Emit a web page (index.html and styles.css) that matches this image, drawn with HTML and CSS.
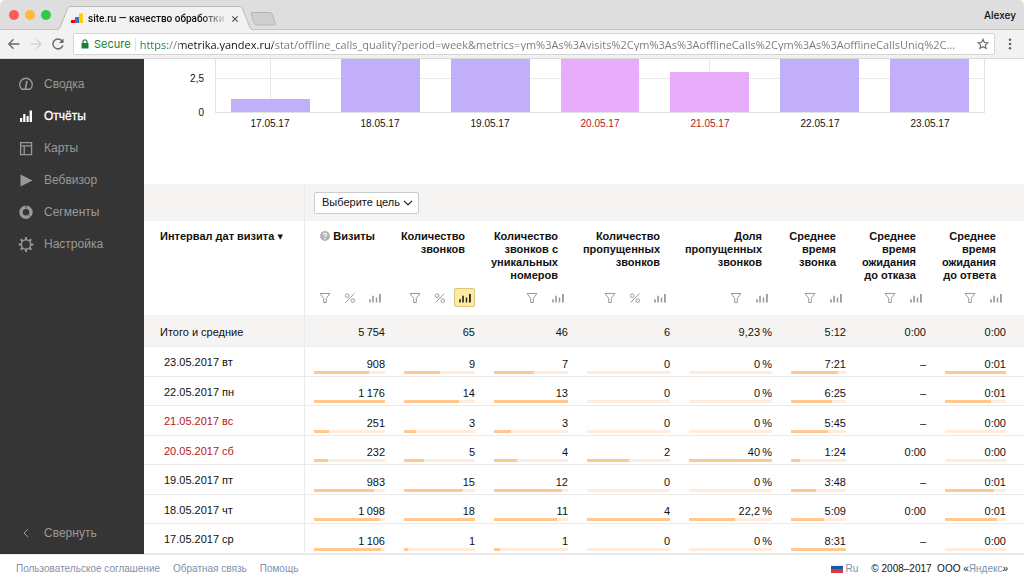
FILE: index.html
```html
<!DOCTYPE html>
<html lang="ru">
<head>
<meta charset="utf-8">
<title>site.ru — качество обработки</title>
<link rel="stylesheet" href="styles.css">
</head>
<body>
<svg class="sprite" aria-hidden="true">
  <symbol id="funnel" viewBox="0 0 12 12"><path d="M1 1.5h10L7.3 6.3v4.2H4.7V6.3z" fill="none" stroke="currentColor"/></symbol>
  <symbol id="percent" viewBox="0 0 12 12"><g fill="none" stroke="currentColor"><circle cx="3.2" cy="3.7" r="1.8"/><circle cx="8.8" cy="8.6" r="1.8"/><path d="M10.3 1.5L1.7 10.5"/></g></symbol>
  <symbol id="bars" viewBox="0 0 12 12"><path d="M.2 7.2h1.6v3.3H.2zM3.2 3.7h1.6v6.8H3.2zM6.8 5.6h1.4v4.9H6.8zM10 2h1.8v8.5H10z" fill="currentColor"/></symbol>
</svg>

<header class="browser">
  <div class="tabs">
    <div class="lights"><i class="light red"></i><i class="light amber"></i><i class="light green"></i></div>
    <div class="tab">
      <svg class="tab-edge" viewBox="0 0 14 24"><path d="M0 24C3 23 3 22 4 19L10 4C11 1 12 .5 14 .5V24z" fill="#f2f2f2"/><path d="M0 23.5C3 23 3 22 4 19L10 4C11 1 12 .5 14 .5" fill="none" stroke="#b9b9b9"/></svg>
      <div class="tab-body">
        <svg class="favicon" viewBox="0 0 12 11"><path d="M0 7h4v3H0z" fill="#f00"/><path d="M4 4h4v6H4z" fill="#3f72c8"/><path d="M8 .5h4V10H8z" fill="#ffcc00"/></svg>
        <span class="tab-title">site.ru — качество обработки</span>
        <button class="plain" aria-label="Закрыть вкладку"><svg width="8" height="8" viewBox="0 0 8 8"><path d="M1.3 1.3l5.4 5.4M6.7 1.3L1.3 6.7" stroke="#555" stroke-width="1.2"/></svg></button>
      </div>
      <svg class="tab-edge flip" viewBox="0 0 14 24"><path d="M0 24C3 23 3 22 4 19L10 4C11 1 12 .5 14 .5V24z" fill="#f2f2f2"/><path d="M0 23.5C3 23 3 22 4 19L10 4C11 1 12 .5 14 .5" fill="none" stroke="#b9b9b9"/></svg>
    </div>
    <button class="plain new-tab" aria-label="Новая вкладка"><svg width="28" height="14" viewBox="0 0 28 14"><path d="M3 .5h18q1.500 0 2 1.500l3.300 9q.5 2-1.300 2H8q-2 0-2.600-1.500L2 2Q1.500.5 3 .5z" fill="#cfcfcf" stroke="#b5b5b5"/></svg></button>
    <span class="profile">Alexey</span>
  </div>
  <div class="toolbar">
    <button class="plain" aria-label="Назад"><svg width="14" height="14" viewBox="0 0 14 14"><path d="M12.500 7H2M6.500 2.200L1.800 7l4.700 4.800" fill="none" stroke="#666" stroke-width="1.300"/></svg></button>
    <button class="plain" aria-label="Вперёд"><svg width="14" height="14" viewBox="0 0 14 14"><path d="M2 7h10M7.500 2.200L12.200 7l-4.700 4.800" fill="none" stroke="#d2d2d2" stroke-width="1.300"/></svg></button>
    <button class="plain" aria-label="Обновить"><svg width="14" height="14" viewBox="0 0 14 14"><path d="M11.800 8.200A5 5 0 1 1 10.600 3.500L12 5" fill="none" stroke="#666" stroke-width="1.400"/><path d="M12.500 1.500V6H8z" fill="#666"/></svg></button>
    <div class="address">
      <svg width="8" height="10" viewBox="0 0 8 10"><path d="M.5 4h7v5.500h-7z" fill="#188038"/><path d="M2 4.500V2.800a2 2 0 0 1 4 0v1.700" fill="none" stroke="#188038" stroke-width="1.200"/></svg>
      <span class="secure">Secure</span>
      <input class="url" type="text" aria-label="Адрес" value="https://metrika.yandex.ru/stat/offline_calls_quality?period=week&amp;metrics=ym%3As%3Avisits%2Cym%3As%3AofflineCalls%2Cym%3As%3AofflineCallsUniq%2C…">
      <button class="plain" aria-label="В закладки"><svg width="12" height="12" viewBox="0 0 12 12"><path d="M6 1.300l1.400 3.200 3.500.3-2.600 2.300.8 3.400L6 8.700l-3.100 1.800.8-3.400L1.100 4.800l3.500-.3z" fill="none" stroke="#666" stroke-width="1.100"/></svg></button>
    </div>
    <button class="plain menu" aria-label="Меню"><svg width="4" height="12" viewBox="0 0 4 12"><g fill="#666"><circle cx="2" cy="1.800" r="1.300"/><circle cx="2" cy="6" r="1.300"/><circle cx="2" cy="10.200" r="1.300"/></g></svg></button>
  </div>
</header>

<div class="page">
  <nav class="sidebar">
    <a href="#"><svg viewBox="0 0 16 16"><path d="M3.800 13.300a6.300 6.300 0 1 1 8.400 0z" fill="none" stroke="currentColor" stroke-width="1.400"/><path d="M7.400 13L8.900 5" stroke="currentColor" stroke-width="1.600"/></svg>Сводка</a>
    <a href="#" class="current"><svg viewBox="0 0 16 16"><path d="M2 10h2.200v4H2zM5.200 6h2.200v8H5.200zM8.500 8h2.200v6H8.500zM11.600 2.500H14V14h-2.400z" fill="currentColor"/></svg>Отчёты</a>
    <a href="#"><svg viewBox="0 0 16 16"><path d="M2.600 2.600h11v12h-11zM2.600 5.800h11M6.200 5.800v8.500" fill="none" stroke="currentColor" stroke-width="1.300"/></svg>Карты</a>
    <a href="#"><svg viewBox="0 0 16 16"><path d="M2.500 2.500L14.500 8.500l-12 6z" fill="currentColor"/></svg>Вебвизор</a>
    <a href="#"><svg viewBox="0 0 16 16"><circle cx="8" cy="8.300" r="5" fill="none" stroke="currentColor" stroke-width="3.400"/><path d="M8 .8v3.900M11 11l2 2.500" stroke="#353535" stroke-width=".7"/></svg>Сегменты</a>
    <a href="#"><svg viewBox="0 0 16 16"><circle cx="8" cy="8.500" r="4.700" fill="none" stroke="currentColor" stroke-width="1.500"/><path d="M8 1v2.500M8 13.500V16M.6 8.500h2.500M12.900 8.500h2.500M2.700 3.200l1.800 1.800M11.500 12l1.800 1.800M13.300 3.200L11.500 5M4.500 12l-1.800 1.800" stroke="currentColor" stroke-width="2"/></svg>Настройка</a>
    <button class="plain collapse"><svg viewBox="0 0 16 16"><path d="M10 4L6 8l4 4" fill="none" stroke="currentColor"/></svg>Свернуть</button>
  </nav>

  <main class="report">
    <section class="chart">
      <div class="y-axis"><span>2,5</span><span>0</span></div>
      <div class="plot">
        <div class="slot"><div class="column" style="height:25%"></div></div>
        <div class="slot"><div class="column" style="height:100%"></div></div>
        <div class="slot"><div class="column" style="height:100%"></div></div>
        <div class="slot"><div class="column weekend" style="height:100%"></div></div>
        <div class="slot"><div class="column weekend" style="height:76%"></div></div>
        <div class="slot"><div class="column" style="height:100%"></div></div>
        <div class="slot"><div class="column" style="height:100%"></div></div>
      </div>
      <div class="x-axis"><span>17.05.17</span><span>18.05.17</span><span>19.05.17</span><span class="holiday">20.05.17</span><span class="holiday">21.05.17</span><span>22.05.17</span><span>23.05.17</span></div>
    </section>

    <table class="stats">
      <colgroup><col class="c-date"><col class="c-visits"><col class="c-calls"><col class="c-unique"><col class="c-missed"><col class="c-share"><col class="c-time"><col class="c-wait"><col class="c-answer"></colgroup>
      <thead>
        <tr class="goal-row">
          <td></td>
          <td colspan="8"><div class="goal"><select aria-label="Цель"><option>Выберите цель</option></select><svg width="10" height="6" viewBox="0 0 10 6"><path d="M1 .8l4 4 4-4" fill="none" stroke="#222" stroke-width="1.200"/></svg></div></td>
        </tr>
        <tr class="head-row">
          <th scope="col">Интервал дат визита <span class="sort">▼</span></th>
          <th scope="col"><svg class="help" viewBox="0 0 10 10"><circle cx="5" cy="5" r="5" fill="#b5b5b5"/><path d="M3.500 3.900C3.500 1.700 6.500 1.800 6.500 3.700 6.500 4.800 5 4.700 5 6M5 7v1.200" fill="none" stroke="#fff" stroke-width="1.100"/></svg> Визиты</th>
          <th scope="col">Количество звонков</th>
          <th scope="col">Количество звонков с уникальных номеров</th>
          <th scope="col">Количество пропущенных звонков</th>
          <th scope="col">Доля пропущенных звонков</th>
          <th scope="col">Среднее время звонка</th>
          <th scope="col">Среднее время ожидания до&nbsp;отказа</th>
          <th scope="col">Среднее время ожидания до&nbsp;ответа</th>
        </tr>
        <tr class="tool-row">
          <td></td>
          <td><div class="tools"><button aria-label="Фильтр"><svg><use href="#funnel"/></svg></button><button class="slim" aria-label="Проценты"><svg><use href="#percent"/></svg></button><button aria-label="График"><svg><use href="#bars"/></svg></button></div></td>
          <td><div class="tools"><button aria-label="Фильтр"><svg><use href="#funnel"/></svg></button><button class="slim" aria-label="Проценты"><svg><use href="#percent"/></svg></button><button class="active" aria-label="График"><svg><use href="#bars"/></svg></button></div></td>
          <td><div class="tools"><button aria-label="Фильтр"><svg><use href="#funnel"/></svg></button><button aria-label="График"><svg><use href="#bars"/></svg></button></div></td>
          <td><div class="tools"><button aria-label="Фильтр"><svg><use href="#funnel"/></svg></button><button class="slim" aria-label="Проценты"><svg><use href="#percent"/></svg></button><button aria-label="График"><svg><use href="#bars"/></svg></button></div></td>
          <td><div class="tools"><button aria-label="Фильтр"><svg><use href="#funnel"/></svg></button><button aria-label="График"><svg><use href="#bars"/></svg></button></div></td>
          <td><div class="tools"><button aria-label="Фильтр"><svg><use href="#funnel"/></svg></button><button aria-label="График"><svg><use href="#bars"/></svg></button></div></td>
          <td><div class="tools"><button aria-label="Фильтр"><svg><use href="#funnel"/></svg></button><button aria-label="График"><svg><use href="#bars"/></svg></button></div></td>
          <td><div class="tools"><button aria-label="Фильтр"><svg><use href="#funnel"/></svg></button><button aria-label="График"><svg><use href="#bars"/></svg></button></div></td>
        </tr>
        <tr class="total-row">
          <th scope="row">Итого и средние</th><td>5&#8201;754</td><td>65</td><td>46</td><td>6</td><td>9,23&#8201;%</td><td>5:12</td><td>0:00</td><td>0:00</td>
        </tr>
      </thead>
      <tbody>
        <tr><th scope="row">23.05.2017 вт</th>
          <td>908<div class="bar"><i style="width:77%"></i></div></td><td>9<div class="bar"><i style="width:50%"></i></div></td><td>7<div class="bar"><i style="width:54%"></i></div></td><td>0<div class="bar"></div></td><td>0&#8201;%<div class="bar"></div></td><td>7:21<div class="bar"><i style="width:86%"></i></div></td><td class="bare">–</td><td>0:01<div class="bar"><i style="width:100%"></i></div></td></tr>
        <tr><th scope="row">22.05.2017 пн</th>
          <td>1&#8201;176<div class="bar"><i style="width:100%"></i></div></td><td>14<div class="bar"><i style="width:78%"></i></div></td><td>13<div class="bar"><i style="width:100%"></i></div></td><td>0<div class="bar"></div></td><td>0&#8201;%<div class="bar"></div></td><td>6:25<div class="bar"><i style="width:75%"></i></div></td><td class="bare">–</td><td>0:01<div class="bar"><i style="width:75%"></i></div></td></tr>
        <tr class="holiday"><th scope="row">21.05.2017 вс</th>
          <td>251<div class="bar"><i style="width:21%"></i></div></td><td>3<div class="bar"><i style="width:17%"></i></div></td><td>3<div class="bar"><i style="width:23%"></i></div></td><td>0<div class="bar"></div></td><td>0&#8201;%<div class="bar"></div></td><td>5:45<div class="bar"><i style="width:67%"></i></div></td><td class="bare">–</td><td>0:00<div class="bar"></div></td></tr>
        <tr class="holiday"><th scope="row">20.05.2017 сб</th>
          <td>232<div class="bar"><i style="width:20%"></i></div></td><td>5<div class="bar"><i style="width:28%"></i></div></td><td>4<div class="bar"><i style="width:31%"></i></div></td><td>2<div class="bar"><i style="width:50%"></i></div></td><td>40&#8201;%<div class="bar"><i style="width:100%"></i></div></td><td>1:24<div class="bar"><i style="width:17%"></i></div></td><td class="bare">0:00</td><td>0:00<div class="bar"></div></td></tr>
        <tr><th scope="row">19.05.2017 пт</th>
          <td>983<div class="bar"><i style="width:84%"></i></div></td><td>15<div class="bar"><i style="width:83%"></i></div></td><td>12<div class="bar"><i style="width:92%"></i></div></td><td>0<div class="bar"></div></td><td>0&#8201;%<div class="bar"></div></td><td>3:48<div class="bar"><i style="width:45%"></i></div></td><td class="bare">–</td><td>0:01<div class="bar"><i style="width:80%"></i></div></td></tr>
        <tr><th scope="row">18.05.2017 чт</th>
          <td>1&#8201;098<div class="bar"><i style="width:93%"></i></div></td><td>18<div class="bar"><i style="width:100%"></i></div></td><td>11<div class="bar"><i style="width:85%"></i></div></td><td>4<div class="bar"><i style="width:100%"></i></div></td><td>22,2&#8201;%<div class="bar"><i style="width:56%"></i></div></td><td>5:09<div class="bar"><i style="width:60%"></i></div></td><td class="bare">0:00</td><td>0:01<div class="bar"><i style="width:86%"></i></div></td></tr>
        <tr><th scope="row">17.05.2017 ср</th>
          <td>1&#8201;106<div class="bar"><i style="width:94%"></i></div></td><td>1<div class="bar"><i style="width:6%"></i></div></td><td>1<div class="bar"><i style="width:8%"></i></div></td><td>0<div class="bar"></div></td><td>0&#8201;%<div class="bar"></div></td><td>8:31<div class="bar"><i style="width:100%"></i></div></td><td class="bare">–</td><td>0:00<div class="bar"></div></td></tr>
      </tbody>
    </table>
  </main>
</div>

<footer class="footer">
  <a href="#">Пользовательское соглашение</a>
  <a href="#">Обратная связь</a>
  <a href="#">Помощь</a>
  <a href="#" class="lang"><svg width="12" height="9" viewBox="0 0 12 9"><path d="M0 0h12v9H0z" fill="#f4f4f4"/><path d="M0 2h12v4H0z" fill="#1557a8"/><path d="M0 5h12v4H0z" fill="#d93a3f"/></svg>Ru</a>
  <span>© 2008–2017&nbsp; ООО «<a href="#">Яндекс</a>»</span>
</footer>
</body>
</html>
```
FILE: styles.css
```css
* { box-sizing: border-box; }

body {
  margin: 0;
  min-height: 100vh;
  display: flex;
  flex-direction: column;
  background: #fff;
  color: #111;
  font: 11px/13px "Liberation Sans", Arial, sans-serif;
}

a { color: inherit; text-decoration: none; }

.sprite { display: none; }

.plain {
  display: flex;
  align-items: center;
  padding: 0;
  border: 0;
  background: none;
  color: inherit;
  font: inherit;
}

/* Browser window */
.browser { font-family: Inter, "Open Sans", sans-serif; }

.tabs {
  display: flex;
  align-items: flex-end;
  height: 30px;
  padding: 0 8px;
  border-bottom: 1px solid #c3c3c3;
  border-radius: 5px 5px 0 0;
  background: #dedede;
}

.lights { display: flex; gap: 6px; padding-bottom: 9px; margin-right: 6px; }
.light { width: 10px; height: 10px; border-radius: 50%; }
.red { background: #fc5b57; }
.amber { background: #fdb93c; }
.green { background: #34c84a; }
.lights .light:first-child { margin-left: 1px; }

.tab { display: flex; height: 24px; margin-bottom: -1px; }
.tab-edge { width: 14px; height: 24px; }
.flip { transform: scaleX(-1); }
.tab-body {
  display: flex;
  align-items: center;
  width: 168px;
  border-top: 1px solid #b9b9b9;
  background: #f2f2f2;
}
.favicon { width: 12px; height: 11px; margin-right: 5px; flex: none; }
.tab-title {
  flex: 1;
  overflow: hidden;
  white-space: nowrap;
  font-family: Roboto, sans-serif;
  font-size: 10px;
  font-weight: 500;
  -webkit-mask-image: linear-gradient(to right, #000 80%, transparent);
  mask-image: linear-gradient(to right, #000 80%, transparent);
}
.tab .plain { margin: 0 0 0 3px; }
.new-tab { padding-bottom: 3px; margin-left: -4px; }
.profile { margin: 0 0 7px auto; font-size: 10px; font-weight: 500; }

.toolbar {
  display: flex;
  align-items: center;
  gap: 8px;
  height: 29px;
  padding: 0 12px 0 7px;
  border-bottom: 1px solid #d8d8d8;
  background: #f2f2f2;
}
.menu { margin-left: 5px; }
.address {
  flex: 1;
  min-width: 0;
  display: flex;
  align-items: center;
  height: 22px;
  padding: 0 5px 0 7px;
  border: 1px solid #d4d4d4;
  border-radius: 2px;
  background: #fff;
  font-size: 11px;
}
.secure {
  margin-left: 5px;
  padding-right: 4px;
  border-right: 1px solid #e2e2e2;
  color: #188038;
}
.url {
  flex: 1;
  min-width: 0;
  margin: 0 4px 0 4px;
  padding: 0;
  border: 0;
  outline: 0;
  font: inherit;
  font-family: "Open Sans", sans-serif;
  color: transparent;
  background: linear-gradient(to right, #188038 29px, #777 29px 40px, #111 40px 133px, #777 133px);
  -webkit-background-clip: text;
  background-clip: text;
}

/* Page frame */
.page { flex: 1; display: flex; }

.sidebar {
  flex: none;
  display: flex;
  flex-direction: column;
  width: 144px;
  padding: 9px 18px 5px;
  background: #353535;
  color: #999;
  font-size: 12px;
}
.sidebar a, .collapse {
  display: flex;
  align-items: center;
  gap: 10px;
  height: 32px;
}
.sidebar svg { width: 16px; height: 16px; }
.sidebar .current { color: #fff; -webkit-text-stroke: 0.3px #fff; }
.collapse { margin-top: auto; }

.report { flex: 1; min-width: 0; }

/* Chart */
.chart {
  display: grid;
  grid-template-columns: 60px 1fr;
  grid-template-rows: 54px auto;
  column-gap: 11px;
  padding: 0 39px 54px 0;
  font-size: 10px;
}
.y-axis {
  display: flex;
  flex-direction: column;
  gap: 21px;
  padding-top: 13px;
  text-align: right;
}
.plot {
  display: grid;
  grid-template-columns: repeat(7, 1fr);
  border: solid #e2e2e2;
  border-width: 0 1px 1px;
  background: linear-gradient(#e8e8e8, #e8e8e8) 0 19px / 100% 1px no-repeat;
}
.slot {
  display: flex;
  align-items: flex-end;
  justify-content: center;
  background: linear-gradient(#e8e8e8, #e8e8e8) 50% 0 / 1px 100% no-repeat;
}
.column { width: 72%; background: #c1affa; }
.weekend { background: #e8adfa; }
.x-axis {
  grid-column: 2;
  display: grid;
  grid-template-columns: repeat(7, 1fr);
  padding-top: 4px;
  text-align: center;
}
.holiday, .holiday th { color: #b8151b; }
.holiday td { color: #111; }

/* Table */
.stats { width: 100%; table-layout: fixed; border-collapse: separate; border-spacing: 0; }
.c-date { width: 161px; }
.c-visits, .c-calls { width: 90px; }
.c-unique { width: 93px; }
.c-missed, .c-share { width: 102px; }
.c-time { width: 74px; }
.c-wait { width: 80px; }
.c-answer { width: 88px; }

.stats th, .stats td { padding: 0 10px 0 9px; text-align: right; font-weight: 400; }
.stats tr > :first-child { padding-left: 16px; border-right: 1px solid #ebebeb; text-align: left; }
.stats tr > :nth-child(9) { padding-right: 18px; }

.goal-row td { height: 37px; background: #f5f4f2; }
.goal { display: inline-grid; align-items: center; float: left; }
.goal > * { grid-area: 1 / 1; }
.goal svg { justify-self: end; margin-right: 6px; pointer-events: none; }
.goal select {
  appearance: none;
  height: 22px;
  padding: 0 18px 0 7px;
  border: 1px solid #ccc;
  border-radius: 2px;
  background: #fff;
  color: #111;
  font: inherit;
}

.stats .head-row th { padding: 9px 20px 0 2px; vertical-align: top; font-weight: 700; }
.stats .head-row th:first-child { padding: 9px 0 0 16px; }
.stats .head-row th:nth-child(9) { padding-right: 28px; }
.sort { font: 7px "DejaVu Sans", sans-serif; vertical-align: 1px; }
.help { width: 10px; height: 10px; vertical-align: -1px; }

.stats .tool-row td { height: 33px; padding-bottom: 2px; vertical-align: middle; }
.tools { display: flex; justify-content: flex-end; gap: 5px; }
.tools button {
  display: grid;
  place-items: center;
  width: 21px;
  height: 19px;
  padding: 0;
  border: 1px solid transparent;
  border-radius: 2px;
  background: none;
  color: #999;
}
.tools .slim { width: 19px; }
.tools svg { width: 12px; height: 12px; }
.tools .active { border-color: #dcc67c; background: #ffeba0; color: #222; }

.stats .total-row > * { height: 32px; padding-top: 3px; border-bottom: 1px solid #ebebeb; background: #f5f4f2; }

tbody tr > * { height: 30px; border-bottom: 1px solid #ebebeb; }
tbody tr:nth-child(even) > * { height: 29px; }
.stats tbody th:first-child { padding-top: 2px; padding-left: 20px; }
.stats tbody td { padding-bottom: 2px; vertical-align: bottom; }
.stats tbody .bare { padding-bottom: 5px; }
.bar { height: 3px; background: #ffecdc; }
.bar i { display: block; height: 3px; background: #ffc891; }

/* Footer */
.footer {
  display: flex;
  align-items: center;
  gap: 13px;
  height: 30px;
  padding: 0 16px 2px;
  border-top: 1px solid #e8e8e8;
  font-size: 10px;
}
.footer a { color: #8390a8; }
.footer .lang { display: flex; align-items: center; gap: 3px; margin-left: auto; }
```
